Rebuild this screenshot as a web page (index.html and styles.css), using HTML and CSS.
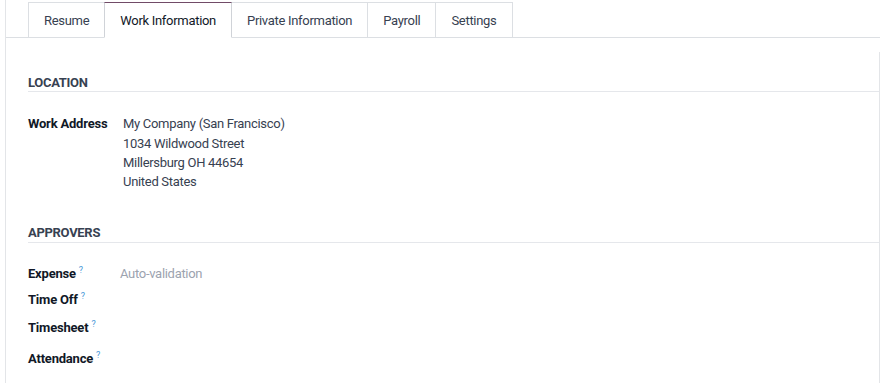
FILE: index.html
```html
<!DOCTYPE html>
<html lang="en">
<head>
<meta charset="utf-8">
<title>Employee - Work Information</title>
<link rel="stylesheet" href="styles.css">
</head>
<body>
<div class="sheet">
  <ul class="tabs">
    <li class="tab">Resume</li>
    <li class="tab active">Work Information</li>
    <li class="tab">Private Information</li>
    <li class="tab">Payroll</li>
    <li class="tab">Settings</li>
  </ul>
  <div class="pane">
    <div class="group group-location">
      <div class="group-title">LOCATION</div>
      <div class="row row-address">
        <div class="label">Work Address</div>
        <div class="value">
          <div class="addr-name">My Company (San Francisco)</div>
          <div class="addr-line">1034 Wildwood Street</div>
          <div class="addr-line">Millersburg OH 44654</div>
          <div class="addr-line">United States</div>
        </div>
      </div>
    </div>
    <div class="group group-approvers">
      <div class="group-title">APPROVERS</div>
      <div class="row row-approver r1">
        <div class="label">Expense<sup class="help">?</sup></div>
        <div class="value placeholder">Auto-validation</div>
      </div>
      <div class="row row-approver r2">
        <div class="label">Time Off<sup class="help">?</sup></div>
        <div class="value"></div>
      </div>
      <div class="row row-approver r3">
        <div class="label">Timesheet<sup class="help">?</sup></div>
        <div class="value"></div>
      </div>
      <div class="row row-approver r4">
        <div class="label">Attendance<sup class="help">?</sup></div>
        <div class="value"></div>
      </div>
    </div>
  </div>
</div>
</body>
</html>
```
FILE: styles.css
```css
* { box-sizing: border-box; }
html, body { margin: 0; padding: 0; background: #ffffff; }
body {
  font-family: Roboto, "Liberation Sans", Arial, sans-serif;
  font-size: 13px;
  letter-spacing: -0.3px;
  color: #374151;
  overflow: hidden;
  height: 383px;
}
.sheet {
  margin-left: 5px;
  border-left: 1px solid #e3e5e8;
  min-height: 383px;
  padding-top: 2px;
}
.tabs {
  list-style: none;
  margin: 0;
  padding: 0 0 0 22px;
  display: flex;
  border-bottom: 1px solid #dcdfe3;
}
.tab {
  height: 36px;
  margin-bottom: -1px;
  padding: 0 15px;
  display: flex;
  align-items: center;
  border: 1px solid #dcdfe3;
  margin-right: -1px;
  color: #374151;
  background: #ffffff;
}
.tab.active {
  border-top-color: #714b67;
  border-left-color: #d0d3d8;
  border-right-color: #d0d3d8;
  border-bottom-color: #ffffff;
  color: #111827;
  position: relative;
  z-index: 1;
}
.pane {
  margin-top: 14px;
  margin-left: 22px;
  border-right: 1px solid #e3e5e8;
  min-height: 340px;
  padding-top: 23px;
}
.group-title {
  font-weight: 700;
  color: #374151;
  line-height: 15px;
  padding-bottom: 1px;
  border-bottom: 1px solid #e5e7eb;
}
.group-approvers .group-title { padding-bottom: 2px; }
.row {
  display: flex;
}
.label {
  font-weight: 700;
  color: #111827;
  line-height: 19px;
  letter-spacing: -0.2px;
}
.row-address { margin-top: 22px; }
.row-address .label { width: 95px; }
.addr-name { line-height: 19px; margin-bottom: 1px; }
.addr-line { line-height: 19px; }
.group-approvers { margin-top: 34px; }
.row-approver .label { width: 92px; }
.row-approver .value { line-height: 19px; }
.r1 { margin-top: 21px; }
.r2 { margin-top: 7px; }
.r3 { margin-top: 9px; }
.r4 { margin-top: 12px; }
.placeholder { color: #9ca3af; }
.help {
  color: #4a98d8;
  font-weight: 400;
  font-size: 9px;
  margin-left: 3px;
  vertical-align: top;
  position: relative;
  top: -3px;
}
```
